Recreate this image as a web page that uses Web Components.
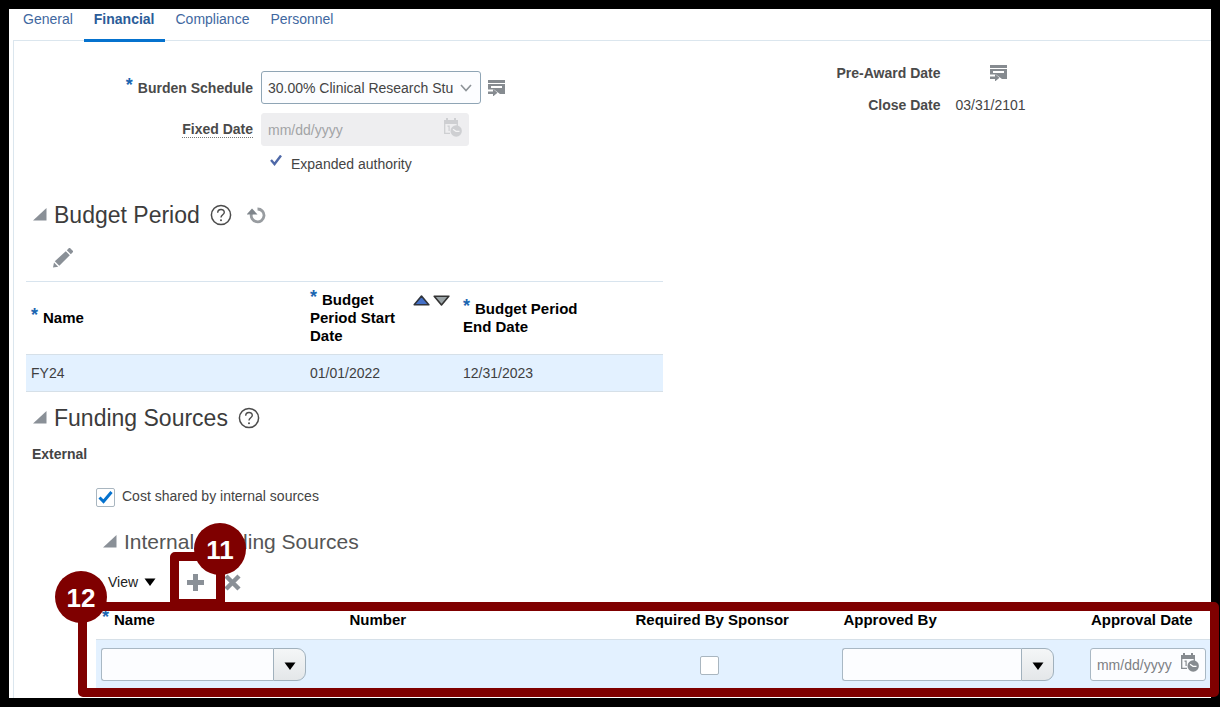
<!DOCTYPE html>
<html lang="en">
<head>
<meta charset="utf-8">
<title>Award financial details</title>
<style>
  html { background: #000; }
  body { margin: 0; font-family: "Liberation Sans", Arial, sans-serif; font-size: 14px; line-height: 18px; color: #444; }
</style>
</head>
<body>
<award-page></award-page>

<script>
const define = (name, html, setup) => {
  const template = document.createElement('template');
  template.innerHTML = html;
  customElements.define(name, class extends HTMLElement {
    constructor() {
      super();
      this.attachShadow({ mode: 'open' }).append(template.content.cloneNode(true));
    }
    connectedCallback() {
      if (setup && !this.ready) { this.ready = true; setup(this, this.shadowRoot); }
    }
  });
};

/* Icons: [width, height, markup] */
const icons = {
  history: [18, 16, `<path fill="currentColor" d="M0 0h17v3H0z"/><path fill="currentColor" fill-rule="evenodd" d="M0 4h17v10h-5L6 9.500H0zM3 6v2h11V6z"/><path fill="currentColor" d="M0 11.500h5V9l4.500 3.800L5 16.500V14H0z"/>`],
  calendar: [20, 19, `<path fill="currentColor" d="M2 2h2V0h2v2h6V0h2v2h2v4H2z"/><path d="M2.700 5v10.300H8M15.300 5v3" fill="none" stroke="currentColor" stroke-width="1.300"/><path fill="currentColor" d="M5.500 7.500h2.200V13H6.500V8.700h-1z"/><circle cx="14.200" cy="13" r="5.700" fill="currentColor"/><path d="M11 11.300l3 2h3.500" fill="none" stroke="var(--cut,#fff)" stroke-width="1.200"/>`],
  disclose: [14, 13, `<path fill="#8a9097" d="M13.500 0v12.500H0z"/>`],
  help: [22, 22, `<circle cx="11" cy="11" r="9.600" fill="none" stroke="#4c4c4c" stroke-width="1.500"/><path d="M7.700 8.700c0-4.300 6.600-4.200 6.600-.4 0 2.400-3.300 2.600-3.300 5.200" fill="none" stroke="#4c4c4c" stroke-width="1.400"/><circle cx="11" cy="16.200" r="1" fill="#4c4c4c"/>`],
  refresh: [20, 18, `<path d="M10.500 3A6.400 6.400 0 1 1 4.500 7.500" fill="none" stroke="#989ca0" stroke-width="2.800"/><path fill="#7f858b" d="M-.5 8.500L5 2.500l5.500 6z"/>`],
  pencil: [20, 20, `<path fill="#8a9097" d="M0 19.500l1-5 4.200 4.200zM1.800 13.200L12.800 3.200l4 4L6.300 17.700zM13.800 2.200L16 0h1l3 3v1l-2.200 2.200z"/>`],
  up: [17, 11, `<path d="M8.500 1L15.800 9.800H1.200z" fill="#4470c8" stroke="#30343c" stroke-width="1.600" stroke-linejoin="round"/>`],
  down: [17, 11, `<path d="M8.500 10L15.800 1.200H1.200z" fill="#9aa3a6" stroke="#333" stroke-width="1.600" stroke-linejoin="round"/>`],
  check: [13, 18, `<path d="M2 5l3.500 4L12 .5" fill="none" stroke="#4f69a8" stroke-width="2.400"/>`],
  plus: [17, 17, `<path fill="#8a9097" d="M6 0h5v6h6v5h-6v6H6v-6H0V6h6z"/>`],
  remove: [17, 17, `<path d="M2 2l13 13M15 2L2 15" stroke="#8a9097" stroke-width="4.500"/>`],
  caret: [12, 8, `<path fill="#000" d="M.5.500h11L6 8z"/>`],
  chevron: [12, 8, `<path d="M1 1l5 5.500L11 1" fill="none" stroke="#8d9398" stroke-width="1.600"/>`]
};
define('ui-icon', `<style>:host{display:inline-flex;flex:none}svg{display:block}</style><svg aria-hidden="true"></svg>`, (el, root) => {
  const [w, h, body] = icons[el.getAttribute('name')];
  const svg = root.querySelector('svg');
  svg.setAttribute('width', w); svg.setAttribute('height', h); svg.setAttribute('viewBox', `0 0 ${w} ${h}`);
  svg.innerHTML = body;
});

define('icon-button', `<style>
  :host{display:inline-flex;flex:none}
  button{display:flex;margin:0;padding:0;border:0;background:none;color:#868b90;cursor:pointer}
</style><button type="button"><slot></slot></button>`, (el, root) => root.querySelector('button').setAttribute('aria-label', el.getAttribute('label')));

define('required-mark', `<style>
  :host{display:inline-block;width:12px;font-size:18px;line-height:12px;color:#1b66b1;text-align:left;vertical-align:2px;height:12px}
</style>*`);

define('tab-link', `<style>
  :host{display:block}
  a{display:block;box-sizing:border-box;height:33px;padding:1px 10px 0;color:#41689f;text-decoration:none}
  :host([selected]) a{font-weight:700;color:#2a5c98;border-bottom:3px solid #0572ce}
</style><a href="#"><slot></slot></a>`);

define('tab-bar', `<style>
  :host{display:block;height:31px}
  nav{display:flex;gap:1px}
</style><nav><slot></slot></nav>`);

define('section-heading', `<style>
  :host{display:flex;align-items:center;height:28px}
  h2{margin:0 10px 0 7px;font-size:23px;line-height:28px;font-weight:400;color:#3c3c3c}
  icon-button{padding-bottom:2px}
  :host([sub]) h2{font-size:21px;color:#555}
  ::slotted(*){margin-right:15px}
</style><icon-button label="Collapse section"><ui-icon name="disclose"></ui-icon></icon-button><h2></h2><slot></slot>`,
  (el, root) => root.querySelector('h2').textContent = el.getAttribute('heading'));

define('date-input', `<style>
  :host{display:flex;position:relative;align-items:center;--cut:#fff}
  input{box-sizing:border-box;width:100%;height:33px;margin:0;padding:0 6px;border:1px solid #a9b8c4;border-radius:3px;background:#fcfdff;font:inherit;color:#444}
  input::placeholder{color:#7d8084}
  icon-button{position:absolute;right:7px;top:5px}
  :host([disabled]) input{border-color:#eeeef0;background:#eeeef0}
  :host([disabled]) input::placeholder{color:#a2a4a6}
  :host([disabled]) icon-button{opacity:.3}
</style><input type="text" placeholder="mm/dd/yyyy"><icon-button label="Select date"><ui-icon name="calendar"></ui-icon></icon-button>`,
  (el, root) => {
    const input = root.querySelector('input');
    input.disabled = el.hasAttribute('disabled');
    input.setAttribute('aria-label', el.getAttribute('label'));
  });

define('combo-box', `<style>
  :host{display:flex;height:33px}
  input{box-sizing:border-box;flex:1;min-width:0;margin:0;padding:0 6px;border:1px solid #a9b8c4;border-right:0;border-radius:3px 0 0 3px;background:#fcfdff;font:inherit}
  button{box-sizing:border-box;width:33px;padding:2px 0 0;display:flex;align-items:center;justify-content:center;border:1px solid #a1b1bd;border-radius:0 9px 9px 0;background:linear-gradient(#f4f6f7,#e4e7e9)}
</style><input type="text" role="combobox" aria-expanded="false"><button type="button" aria-label="Open list"><ui-icon name="caret"></ui-icon></button>`,
  (el, root) => root.querySelector('input').setAttribute('aria-label', el.getAttribute('label')));

define('tick-box', `<style>
  :host{display:inline-flex}
  label{display:flex;align-items:flex-start;gap:7px}
  input{appearance:none;box-sizing:border-box;width:19px;height:19px;margin:1px 0 0;border:1px solid #a9b6c0;border-radius:2px;background:#fff}
  input:checked{background:#fff url("data:image/svg+xml,%3Csvg xmlns='http://www.w3.org/2000/svg' viewBox='0 0 17 17'%3E%3Cpath d='M2.500 8.500l4 4 8-9.500' fill='none' stroke='%230572ce' stroke-width='3'/%3E%3C/svg%3E") center/17px no-repeat}
</style><label><input type="checkbox"><span><slot></slot></span></label>`,
  (el, root) => {
    const input = root.querySelector('input');
    input.checked = el.hasAttribute('checked');
    if (el.hasAttribute('label')) input.setAttribute('aria-label', el.getAttribute('label'));
  });

/* Numbered step marker: an outline round its host's container with a disc on one corner */
define('step-callout', `<style>
  :host{position:absolute;box-sizing:border-box;border:9px solid #7f0000;border-radius:5px;pointer-events:none}
  b{position:absolute;left:var(--disc-x);top:var(--disc-y);width:52px;height:52px;border-radius:50%;background:#7f0000;color:#fff;font-size:26px;line-height:54px;text-align:center}
</style><b><slot></slot></b>`);

define('award-form', `<style>
  :host{display:grid;grid-template-columns:1fr 1fr}
  .left,.right{display:grid;align-content:start;align-items:center}
  .left{grid-template-columns:239px 1fr;column-gap:8px;row-gap:9px;padding-top:30px}
  .right{grid-template-columns:328px 1fr;column-gap:15px;grid-auto-rows:32px;padding-top:16px}
  .label{justify-self:end;font-weight:700;color:#4a4a4a}
  .line{display:flex;align-items:center;gap:7px}
  .pick{display:flex;position:relative;align-items:center;width:220px}
  .pick ui-icon{position:absolute;right:9px;pointer-events:none}
  select{appearance:none;box-sizing:border-box;width:100%;height:33px;margin:0;padding:0 27px 0 6px;border:1px solid #8fa5b5;border-radius:3px;background:#fcfdff;font:inherit;color:#444}
  date-input{width:208px}
  .fixed{border-bottom:1px dotted #777;line-height:16px}
  .authority{grid-column:2;display:flex;align-items:center;gap:9px;padding-left:8px;line-height:16px}
  .prior{display:flex;padding-left:34px}
</style>
<div class="left">
  <label class="label" for="burden"><required-mark></required-mark>Burden Schedule</label>
  <div class="line">
    <span class="pick"><select id="burden"><option>30.00% Clinical Research Study</option></select><ui-icon name="chevron"></ui-icon></span>
    <icon-button label="Burden schedule history"><ui-icon name="history"></ui-icon></icon-button>
  </div>
  <span class="label fixed">Fixed Date</span>
  <date-input disabled label="Fixed Date"></date-input>
  <div class="authority"><ui-icon name="check"></ui-icon><span>Expanded authority</span></div>
</div>
<div class="right">
  <span class="label">Pre-Award Date</span>
  <span class="prior"><icon-button label="Pre-award date history"><ui-icon name="history"></ui-icon></icon-button></span>
  <span class="label">Close Date</span><span>03/31/2101</span>
</div>`);

const tableStyle = `
  table{border-collapse:separate;border-spacing:0;table-layout:fixed;width:100%}
  th{font-size:15px;line-height:18px;color:#000;text-align:left;border-bottom:1px solid #d6e0e8}
  tbody td{background:#e3f1ff}`;

define('budget-table', `<style>
  :host{display:block;width:637px;max-width:100%}${tableStyle}
  table{border-top:1px solid #d8e4ee;border-bottom:1px solid #d6e0e8}
  th{height:73px;padding:0 5px;box-sizing:border-box}
  td{height:36px;padding:0 5px;color:#3f3f3f}
  .sortable{display:flex;align-items:flex-start;justify-content:space-between}
  .text{width:92px}
  .arrows{display:flex;gap:3px;padding:4px 3px 0 0}
</style>
<table>
  <colgroup><col style="width:279px"><col style="width:153px"><col style="width:155px"><col></colgroup>
  <thead><tr>
    <th><required-mark></required-mark>Name</th>
    <th><div class="sortable"><span class="text"><required-mark></required-mark>Budget Period Start Date</span>
      <span class="arrows"><icon-button label="Sort ascending"><ui-icon name="up"></ui-icon></icon-button><icon-button label="Sort descending"><ui-icon name="down"></ui-icon></icon-button></span></div></th>
    <th><required-mark></required-mark>Budget Period End Date</th>
    <th></th>
  </tr></thead>
  <tbody><tr><td>FY24</td><td>01/01/2022</td><td>12/31/2023</td><td></td></tr></tbody>
</table>`);

define('funding-table', `<style>
  :host{display:block;position:relative}${tableStyle}
  th{box-sizing:border-box;height:37px;padding:0 6px 2px;white-space:nowrap}
  td{height:49px;padding:0 5px}
  th:nth-child(3){text-align:center;padding-left:12px}
  td:nth-child(3){text-align:center;padding-left:12px}
  td:nth-child(1) combo-box{width:205px}
  td:nth-child(4) combo-box{width:212px}
  tick-box{vertical-align:middle}
  step-callout{left:-18px;right:-8px;top:-1px;bottom:-8px;--disc-x:-32px;--disc-y:-40px}
</style>
<table>
  <colgroup><col style="width:22.200%"><col style="width:21.300%"><col style="width:23%"><col style="width:22.200%"><col></colgroup>
  <thead><tr><th><required-mark></required-mark>Name</th><th>Number</th><th>Required By Sponsor</th><th>Approved By</th><th>Approval Date</th></tr></thead>
  <tbody><tr>
    <td><combo-box label="Name"></combo-box></td><td></td>
    <td><tick-box label="Required By Sponsor"></tick-box></td>
    <td><combo-box label="Approved By"></combo-box></td>
    <td><date-input label="Approval Date"></date-input></td>
  </tr></tbody>
</table>
<step-callout>12</step-callout>`);

define('funding-toolbar', `<style>
  :host{display:flex;align-items:center;height:36px;padding-left:12px;margin-bottom:3px}
  .menu{display:flex;align-items:center;gap:6px;margin:0;padding:0;border:0;background:none;font:inherit;color:#222}
  .add{display:flex;position:relative;margin:0 20px 0 31px}
  step-callout{width:55px;height:56px;left:-17px;top:-22px;z-index:1;--disc-x:15px;--disc-y:-38px}
</style>
<button class="menu" type="button">View <ui-icon name="caret"></ui-icon></button>
<span class="add"><icon-button label="Add row"><ui-icon name="plus"></ui-icon></icon-button><step-callout>11</step-callout></span>
<icon-button label="Delete row"><ui-icon name="remove"></ui-icon></icon-button>`);

define('award-page', `<style>
  :host{display:block;padding:9px;min-height:100vh;box-sizing:border-box;background:#000}
  main{background:#fff;padding:0 0 0 4px;min-height:calc(100vh - 18px);box-sizing:border-box}
  .panel{border-top:1px solid #dbe6ee;border-left:1px solid #dbe6ee;padding-bottom:9px}
  .budget,.funding{padding-left:19px}
  .budget{margin-top:28px}
  .funding{margin-top:12px}
  .edit{display:flex;padding:19px 0 13px 39px}
  budget-table{margin-left:12px}
  .external{margin:13px 0 24px 18px;font-weight:700;color:#444}
  .internal{padding-left:82px}
  .internal section-heading{margin:17px 0 8px 7px}
</style>
<main>
  <tab-bar><tab-link>General</tab-link><tab-link selected>Financial</tab-link><tab-link>Compliance</tab-link><tab-link>Personnel</tab-link></tab-bar>
  <div class="panel">
    <award-form></award-form>
    <section-heading class="budget" heading="Budget Period"><icon-button label="Help"><ui-icon name="help"></ui-icon></icon-button><icon-button label="Refresh"><ui-icon name="refresh"></ui-icon></icon-button></section-heading>
    <div class="edit"><icon-button label="Edit"><ui-icon name="pencil"></ui-icon></icon-button></div>
    <budget-table></budget-table>
    <section-heading class="funding" heading="Funding Sources"><icon-button label="Help"><ui-icon name="help"></ui-icon></icon-button></section-heading>
    <p class="external">External</p>
    <div class="internal">
      <tick-box checked>Cost shared by internal sources</tick-box>
      <section-heading sub heading="Internal Funding Sources"></section-heading>
      <funding-toolbar></funding-toolbar>
      <funding-table></funding-table>
    </div>
  </div>
</main>`);
</script>
</body>
</html>
